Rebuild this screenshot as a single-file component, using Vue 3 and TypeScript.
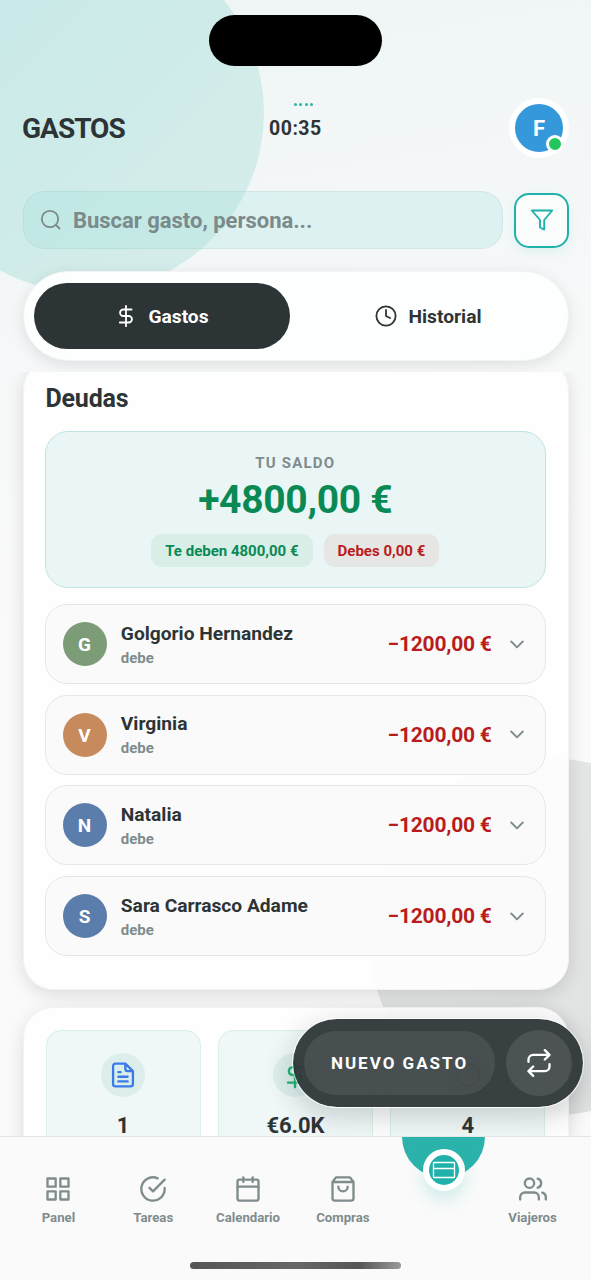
<script setup lang="ts">
interface Debt {
  initial: string
  name: string
  tone: string
}

const debts: Debt[] = [
  { initial: 'G', name: 'Golgorio Hernandez', tone: 'green' },
  { initial: 'V', name: 'Virginia', tone: 'orange' },
  { initial: 'N', name: 'Natalia', tone: 'blue' },
  { initial: 'S', name: 'Sara Carrasco Adame', tone: 'blue' },
]
</script>

<template>
  <div class="screen">
    <div class="blob blob-top"></div>
    <div class="blob blob-bottom"></div>
    <div class="island"></div>

    <header class="header">
      <h1 class="title">GASTOS</h1>
      <div class="timer">
        <span class="dots"><i></i><i></i><i></i><i></i></span>
        <span class="time">00:35</span>
      </div>
      <div class="avatar">F<span class="online"></span></div>
    </header>

    <div class="search-row">
      <div class="search">
        <svg width="24" height="24" viewBox="0 0 24 24" class="line"><circle cx="11" cy="11" r="8.2" /><path d="M17 17l3.500 3.500" /></svg>
        <span class="placeholder">Buscar gasto, persona...</span>
      </div>
      <button class="filter">
        <svg width="24" height="24" viewBox="0 0 24 24" class="line"><path d="M1.800 2.500h20.400L14.200 12v9.600l-4.200-2.100V12z" /></svg>
      </button>
    </div>

    <div class="tabs">
      <div class="tab active">
        <svg width="24" height="24" viewBox="0 0 24 24" class="line"><path d="M12 1.800v20.400M17.600 5.500H9.300a3.200 3.200 0 0 0 0 6.500h5.400a3.200 3.200 0 0 1 0 6.500H5.800" /></svg>
        <span>Gastos</span>
      </div>
      <div class="tab history">
        <svg width="24" height="24" viewBox="0 0 24 24" class="line"><circle cx="12" cy="12" r="9.600" /><path d="M12 6v6l4 2" /></svg>
        <span>Historial</span>
      </div>
    </div>

    <main class="scroll">
      <section class="card debts-card">
        <h2 class="card-title">Deudas</h2>
        <div class="balance">
          <div class="balance-label">TU SALDO</div>
          <div class="balance-value">+4800,00 €</div>
          <div class="chips">
            <span class="chip chip-in">Te deben 4800,00 €</span>
            <span class="chip chip-out">Debes 0,00 €</span>
          </div>
        </div>
        <div class="debts">
          <div v-for="d in debts" :key="d.name" class="debt">
            <div class="person" :class="d.tone">{{ d.initial }}</div>
            <div class="who">
              <div class="name">{{ d.name }}</div>
              <div class="state">debe</div>
            </div>
            <div class="amount">−1200,00 €</div>
            <svg width="14" height="9" viewBox="0 0 14 9" class="line chevron"><path d="M1.200 1.500L7 7.300l5.800-5.800" /></svg>
          </div>
        </div>
      </section>

      <section class="card stats">
        <div class="stat">
          <div class="stat-icon doc">
            <svg width="28" height="28" viewBox="0 0 24 24" class="line"><path d="M14 2.200H5.500a2 2 0 0 0-2 2v15.600a2 2 0 0 0 2 2h13a2 2 0 0 0 2-2V8.700zM14 2.200v4.500a2 2 0 0 0 2 2h4.500M8 9.500h2M8 13.500h8M8 17.500h8" /></svg>
          </div>
          <div class="stat-value">1</div>
        </div>
        <div class="stat">
          <div class="stat-icon money">
            <svg width="28" height="28" viewBox="0 0 24 24" class="line"><path d="M12 1.500v21M17 5.500H9.500a3.300 3.300 0 0 0 0 6.500h5a3.300 3.300 0 0 1 0 6.500H6" /></svg>
          </div>
          <div class="stat-value">€6.0K</div>
        </div>
        <div class="stat">
          <div class="stat-icon clock">
            <svg width="26" height="26" viewBox="0 0 24 24" class="line"><circle cx="12" cy="12" r="10" /><path d="M12 6v6l4 2" /></svg>
          </div>
          <div class="stat-value">4</div>
        </div>
      </section>
    </main>

    <div class="fab">
      <div class="fab-main">NUEVO GASTO</div>
      <div class="fab-side">
        <svg width="28" height="28" viewBox="0 0 24 24" class="line"><path d="M17 1l4 4-4 4M3 11V9a4 4 0 0 1 4-4h14M7 23l-4-4 4-4M21 13v2a4 4 0 0 1-4 4H3" /></svg>
      </div>
    </div>

    <nav class="nav">
      <div class="nav-item">
        <svg width="28" height="28" viewBox="0 0 24 24" class="line"><path d="M3 3h7v7H3zM14 3h7v7h-7zM14 14h7v7h-7zM3 14h7v7H3z" /></svg>
        <span>Panel</span>
      </div>
      <div class="nav-item">
        <svg width="28" height="28" viewBox="0 0 24 24" class="line"><path d="M22 11.080V12a10 10 0 1 1-5.930-9.140M22 4L12 14.010l-3-3" /></svg>
        <span>Tareas</span>
      </div>
      <div class="nav-item">
        <svg width="28" height="28" viewBox="0 0 24 24" class="line"><rect x="3" y="4" width="18" height="18" rx="1.600" /><path d="M16 2v4M8 2v4M3 10h18" /></svg>
        <span>Calendario</span>
      </div>
      <div class="nav-item">
        <svg width="28" height="28" viewBox="0 0 24 24" class="line"><path d="M6 2L3 6v14a2 2 0 0 0 2 2h14a2 2 0 0 0 2-2V6l-3-4zM3 6h18M16 10a4 4 0 0 1-8 0" /></svg>
        <span>Compras</span>
      </div>
      <div class="nav-item current">
        <div class="dome"><div class="bowl"></div></div>
        <div class="knob">
          <svg width="24" height="18" viewBox="0 0 24 18" class="line"><rect x="1.500" y="1.500" width="21" height="15" rx="0.800" /><path d="M1.500 7.500h21" /></svg>
        </div>
      </div>
      <div class="nav-item">
        <svg width="28" height="28" viewBox="0 0 24 24" class="line"><path d="M17 21v-2a4 4 0 0 0-4-4H5a4 4 0 0 0-4 4v2M23 21v-2a4 4 0 0 0-3-3.870M16 3.130a4 4 0 0 1 0 7.750" /><circle cx="9" cy="7" r="4" /></svg>
        <span>Viajeros</span>
      </div>
      <div class="home-bar"></div>
    </nav>
  </div>
</template>

<style>
body {
  margin: 0;
}
</style>

<style scoped>
* {
  box-sizing: border-box;
}
.screen {
  position: relative;
  width: 591px;
  height: 1280px;
  overflow: hidden;
  display: flex;
  flex-direction: column;
  font-family: Roboto, 'Liberation Sans', sans-serif;
  font-weight: 700;
  color: #2d3436;
  background: linear-gradient(170deg, #eef5f5 0%, #f4f7f8 20%, #fafafa 45%, #fafafa 100%);
}
.blob {
  position: absolute;
  width: 358px;
  height: 358px;
  border-radius: 50%;
}
.blob-top {
  left: -94px;
  top: -66px;
  background: linear-gradient(135deg, #c6e9e8 10%, #d6edea 90%);
}
.blob-bottom {
  left: 369px;
  top: 758px;
  background: linear-gradient(135deg, #e6e8e8, #dfe1e1);
}
.island {
  position: absolute;
  left: 209px;
  top: 15px;
  width: 173px;
  height: 51px;
  border-radius: 26px;
  background: #000;
}
.line {
  display: block;
  flex: none;
  fill: none;
  stroke: currentColor;
  stroke-width: 2;
  stroke-linecap: round;
  stroke-linejoin: round;
}
.header {
  position: relative;
  flex: none;
  display: flex;
  align-items: center;
  justify-content: space-between;
  height: 62px;
  margin-top: 97px;
  padding: 0 22px;
}
.title {
  margin: 0;
  padding-top: 1px;
  font-size: 28px;
  font-weight: 700;
  line-height: 34px;
  letter-spacing: -1px;
}
.timer {
  position: absolute;
  left: 237px;
  top: 7px;
  width: 118px;
  height: 48px;
}
.timer::before {
  content: '';
  position: absolute;
  inset: 0 0 0 28px;
  border: 1px solid rgba(236, 241, 242, 0.5);
  border-left: 0;
  border-radius: 0 10px 10px 0;
}
.dots {
  position: absolute;
  left: 57px;
  top: -1px;
  display: flex;
  gap: 2.300px;
}
.dots i {
  width: 3px;
  height: 3px;
  border-radius: 50%;
  background: #2bb3ab;
}
.time {
  position: absolute;
  left: 32px;
  top: 13px;
  font-size: 19.500px;
  line-height: 24px;
  letter-spacing: 0.500px;
}
.avatar {
  position: relative;
  width: 60px;
  height: 60px;
  border: 6px solid #fff;
  border-radius: 50%;
  background: #3498db;
  color: #fff;
  font-size: 22px;
  line-height: 49px;
  text-align: center;
}
.online {
  position: absolute;
  right: -1px;
  bottom: -1px;
  width: 18px;
  height: 18px;
  border: 3px solid #fff;
  border-radius: 50%;
  background: #22c55e;
}
.search-row {
  position: relative;
  flex: none;
  display: flex;
  align-items: center;
  gap: 11px;
  margin: 32px 22px 0 22.500px;
}
.search {
  flex: 1;
  display: flex;
  align-items: center;
  gap: 10px;
  height: 58px;
  padding-left: 15.500px;
  border: 1px solid rgba(45, 100, 100, 0.07);
  border-radius: 22px;
  background: rgba(155, 226, 219, 0.26);
  color: #7b8a8b;
}
.search .line {
  stroke-width: 1.800;
}
.placeholder {
  padding-top: 1px;
  font-size: 22px;
  line-height: 28px;
  letter-spacing: -0.020px;
}
.filter {
  display: flex;
  align-items: center;
  justify-content: center;
  width: 55px;
  height: 55px;
  padding: 0;
  border: 2.500px solid #20b2aa;
  border-radius: 15px;
  background: #fbfdfd;
  color: #20b2aa;
  box-shadow: 0 4px 12px rgba(32, 178, 170, 0.1);
}
.filter .line {
  stroke-width: 1.900;
}
.tabs {
  position: relative;
  flex: none;
  display: flex;
  height: 90px;
  margin: 21.500px 22.500px 0;
  padding: 11px 10.500px;
  border: 1px solid #f3f4f4;
  border-radius: 45px;
  background: #fdfefe;
  box-shadow: 0 4px 16px rgba(0, 0, 0, 0.1);
}
.tab {
  flex: 1;
  display: flex;
  align-items: center;
  justify-content: center;
  gap: 10px;
  border-radius: 33px;
  font-size: 19.200px;
}
.tab span {
  position: relative;
  top: 0.500px;
}
.tab.history {
  padding-left: 9px;
}
.tab.active {
  flex: 0 0 256px;
  padding-right: 1px;
  background: #2d3436;
  color: #fff;
}
.tab .line {
  stroke-width: 1.800;
}
.scroll {
  position: relative;
  height: 764px;
  flex: none;
  margin-top: 11px;
  overflow: hidden;
}
.card {
  margin: 0 22.500px;
  border: 1px solid #f3f3f3;
  border-radius: 31px;
  background: rgba(254, 254, 254, 0.92);
  box-shadow: 0 5px 18px rgba(0, 0, 0, 0.12);
}
.debts-card {
  height: 631px;
  margin-top: -13px;
  padding: 22.500px 22px 0 21.500px;
}
.card-title {
  margin: 0;
  padding-left: 0.500px;
  font-size: 25px;
  font-weight: 700;
  line-height: 34px;
  letter-spacing: -0.200px;
}
.balance {
  height: 157px;
  margin-top: 14.500px;
  padding-top: 19px;
  border: 1px solid #bfe4e2;
  border-radius: 23px;
  background: #eaf6f6;
  text-align: center;
}
.balance-label {
  font-size: 15px;
  line-height: 24px;
  letter-spacing: 1.200px;
  color: #7f8c8d;
}
.balance-value {
  font-size: 39px;
  line-height: 51px;
  letter-spacing: -0.300px;
  color: #098a55;
}
.chips {
  display: flex;
  justify-content: center;
  gap: 11px;
  margin-top: 8px;
}
.chip {
  padding: 1px 14px 0;
  border-radius: 11px;
  font-size: 15px;
  line-height: 32px;
}
.chip-in {
  background: #d8eee7;
  color: #098a55;
}
.chip-out {
  background: #e6e6e4;
  color: #b91c1c;
}
.debts {
  display: flex;
  flex-direction: column;
  gap: 10.700px;
  margin-top: 16.500px;
}
.debt {
  display: flex;
  align-items: center;
  height: 80px;
  padding: 0 21px 0 16.500px;
  border: 1.500px solid #e6e8e8;
  border-radius: 22px;
  background: #fafafa;
}
.person {
  width: 44px;
  height: 44px;
  border-radius: 50%;
  color: #fff;
  font-size: 19px;
  line-height: 45px;
  text-align: center;
}
.green {
  background: #7c9c77;
}
.orange {
  background: #c68a5c;
}
.blue {
  background: #5b7dab;
}
.who {
  flex: 1;
  margin-left: 14.300px;
  padding-top: 1px;
}
.name {
  font-size: 19.200px;
  line-height: 25px;
}
.state {
  margin-top: 1px;
  font-size: 15px;
  line-height: 22px;
  color: #7f8c8d;
}
.amount {
  font-size: 21px;
  line-height: 26px;
  letter-spacing: -0.250px;
  color: #b91c1c;
}
.chevron {
  margin-left: 18px;
  stroke-width: 1.900;
  color: #7f8c8d;
}
.stats {
  display: flex;
  gap: 17px;
  height: 200px;
  margin-top: 17px;
  padding: 22px;
}
.stat {
  flex: 1;
  display: flex;
  flex-direction: column;
  align-items: center;
  padding-top: 22px;
  border: 1px solid #d8efec;
  border-radius: 15px;
  background: #eff7f7;
}
.stat-icon {
  display: flex;
  align-items: center;
  justify-content: center;
  width: 44px;
  height: 44px;
  border-radius: 50%;
  background: #dceeec;
}
.doc {
  color: #3b7be8;
}
.money {
  color: #22b573;
}
.clock {
  color: #e5a04c;
}
.stat-value {
  margin-top: 19px;
  font-size: 22px;
  line-height: 20px;
}
.fab {
  position: absolute;
  left: 292px;
  top: 1018px;
  width: 292px;
  height: 90px;
  display: flex;
  align-items: center;
  justify-content: space-between;
  padding: 0 11px;
  border: 1px solid rgba(255, 255, 255, 0.5);
  border-radius: 45px;
  background: rgba(45, 52, 54, 0.94);
  background-clip: padding-box;
  box-shadow: 0 8px 28px rgba(45, 52, 54, 0.22);
  color: #fff;
}
.fab-main {
  width: 191px;
  height: 64px;
  padding-top: 1px;
  border-radius: 32px;
  background: rgba(255, 255, 255, 0.08);
  font-size: 17px;
  line-height: 63px;
  letter-spacing: 2px;
  text-align: center;
}
.fab-side {
  display: flex;
  align-items: center;
  justify-content: center;
  width: 66px;
  height: 66px;
  border-radius: 50%;
  background: rgba(255, 255, 255, 0.1);
}
.nav {
  position: relative;
  flex: none;
  display: flex;
  height: 144px;
  padding: 0 11px;
  border-top: 1px solid #e4e6e6;
  background: #fafafa;
  color: #7f8c8d;
}
.nav-item {
  position: relative;
  flex: 1 1 0;
  display: flex;
  flex-direction: column;
  align-items: center;
  padding-top: 38px;
  font-size: 13.200px;
  line-height: 18px;
}
.nav-item span {
  margin-top: 6px;
}
.dome {
  position: absolute;
  left: 12px;
  top: 0;
  width: 83px;
  height: 42px;
  overflow: hidden;
}
.bowl {
  width: 83px;
  height: 83px;
  margin-top: -42px;
  border-radius: 50%;
  background: #2bb3ab;
}
.knob {
  position: absolute;
  left: 32.500px;
  top: 12px;
  display: flex;
  align-items: center;
  justify-content: center;
  width: 42px;
  height: 42px;
  border: 6px solid #fff;
  border-radius: 50%;
  background: #20b2aa;
  color: #fff;
  box-shadow: 0 8px 18px rgba(32, 178, 170, 0.2);
}
.knob .line {
  stroke-width: 1.300;
}
.home-bar {
  position: absolute;
  left: 190px;
  bottom: 11px;
  width: 211px;
  height: 7px;
  border-radius: 4px;
  background: linear-gradient(90deg, #555 0%, #666 50%, #555 80%, #999 100%);
}
</style>
